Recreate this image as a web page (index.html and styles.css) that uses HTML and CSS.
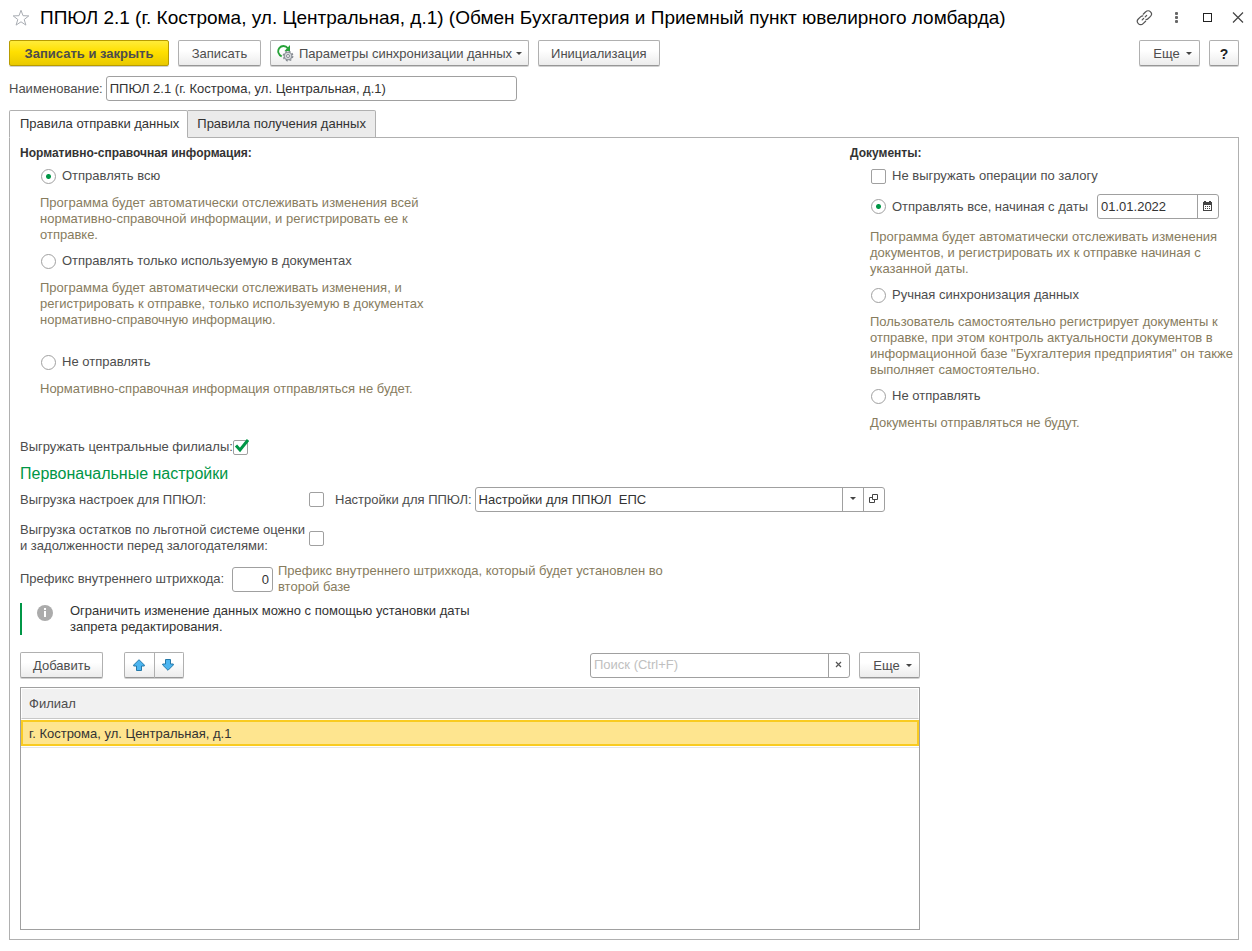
FILE: index.html
```html
<!DOCTYPE html>
<html lang="ru">
<head>
<meta charset="utf-8">
<meta name="viewport" content="width=device-width, initial-scale=1">
<title>ППЮЛ 2.1 (г. Кострома, ул. Центральная, д.1)</title>
<link rel="stylesheet" href="styles.css">
</head>
<body>
<div class="window">
  <header class="titlebar">
    <button class="icon-btn" type="button" aria-label="В избранное">
      <svg width="18" height="18" viewBox="0 0 18 18" fill="none" stroke="#a9adb3" stroke-width="1"><path d="M9 1.3l2 5.4 5.8.2-4.6 3.6 1.7 5.6L9 12.8l-4.900 3.300 1.700-5.600L1.200 6.900 7 6.700z"/></svg>
    </button>
    <h1 class="title">ППЮЛ 2.1 (г. Кострома, ул. Центральная, д.1) (Обмен Бухгалтерия и Приемный пункт ювелирного ломбарда)</h1>
    <div class="window-controls">
      <button class="icon-btn" type="button" aria-label="Получить ссылку">
        <svg width="18" height="18" viewBox="0 0 18 18" fill="none" stroke="#555" stroke-width="1.200" stroke-linecap="round"><path d="M7.200 5.200l2.500-2.400a3.300 3.300 0 0 1 4.800 0 3.300 3.300 0 0 1 0 4.600L12 9.800q-.8.800-2 .8M9.600 12.200l-2.500 2.400a3.300 3.300 0 0 1-4.800 0 3.300 3.300 0 0 1 0-4.600L4.800 7.600q.8-.8 2-.8M6.200 10.900l1.400-1.400M9.200 7.900l1.400-1.400"/></svg>
      </button>
      <button class="icon-btn" type="button" aria-label="Меню">
        <svg width="18" height="18" viewBox="0 0 18 18" fill="#666"><rect x="8" y="3" width="3" height="3" rx="1"/><rect x="8" y="7" width="3" height="3" rx="1"/><rect x="8" y="11" width="3" height="3" rx="1"/></svg>
      </button>
      <button class="icon-btn" type="button" aria-label="Развернуть">
        <svg width="18" height="18" viewBox="0 0 18 18" fill="none" stroke="#222"><rect x="5.500" y="4.500" width="8" height="8"/></svg>
      </button>
      <button class="icon-btn" type="button" aria-label="Закрыть">
        <svg width="18" height="18" viewBox="0 0 18 18" fill="none" stroke="#444" stroke-width="1.200"><path d="M4 3.500l10 10M14 3.500l-10 10"/></svg>
      </button>
    </div>
  </header>

  <div class="toolbar">
    <button class="btn btn-primary" type="button">Записать и закрыть</button>
    <button class="btn" type="button">Записать</button>
    <button class="btn btn-sync" type="button">
      <svg width="18" height="18" viewBox="0 0 18 18" fill="none"><path d="M10.800 3.200A5.300 5.300 0 1 0 4.700 11.300" stroke="#27a338" stroke-width="1.800"/><path d="M13 0v6H7.500z" fill="#27a338"/><g stroke="#868b92"><circle cx="11" cy="11" r="4.800" stroke-width="1.200" stroke-dasharray="2 1.770"/><circle cx="11" cy="11" r="3.900" fill="#d5d8dc"/><circle cx="11" cy="11" r="1.500" fill="#fff"/></g></svg>
      Параметры синхронизации данных
      <span class="caret"></span>
    </button>
    <button class="btn" type="button">Инициализация</button>
    <span class="spacer"></span>
    <button class="btn btn-more" type="button">Еще <span class="caret"></span></button>
    <button class="btn btn-help" type="button" aria-label="Справка">?</button>
  </div>

  <div class="name-row">
    <label for="name">Наименование:</label>
    <input class="field name-field" id="name" type="text" value="ППЮЛ 2.1 (г. Кострома, ул. Центральная, д.1)">
  </div>

  <div class="tabs" role="tablist">
    <button class="tab tab-active" type="button" role="tab" aria-selected="true">Правила отправки данных</button>
    <button class="tab" type="button" role="tab" aria-selected="false">Правила получения данных</button>
  </div>

  <main class="panel">
    <div class="rules">
      <section class="rules-col">
        <h2 class="group-title">Нормативно-справочная информация:</h2>
        <div class="options">
          <label class="option"><input class="radio" type="radio" name="nsi" checked>Отправлять всю</label>
          <p class="hint">Программа будет автоматически отслеживать изменения всей<br>нормативно-справочной информации, и регистрировать ее к<br>отправке.</p>
          <label class="option"><input class="radio" type="radio" name="nsi">Отправлять только используемую в документах</label>
          <p class="hint hint-spaced">Программа будет автоматически отслеживать изменения, и<br>регистрировать к отправке, только используемую в документах<br>нормативно-справочную информацию.</p>
          <label class="option"><input class="radio" type="radio" name="nsi">Не отправлять</label>
          <p class="hint">Нормативно-справочная информация отправляться не будет.</p>
        </div>
      </section>
      <section class="rules-col rules-docs">
        <h2 class="group-title">Документы:</h2>
        <div class="options">
          <label class="option"><input class="check" type="checkbox">Не выгружать операции по залогу</label>
          <div class="date-row">
            <label class="option"><input class="radio" type="radio" name="docs" checked>Отправлять все, начиная с даты</label>
            <div class="combo date-combo">
              <input class="combo-input" type="text" value="01.01.2022" aria-label="Дата начала">
              <button class="combo-btn" type="button" aria-label="Выбрать дату">
                <svg width="9" height="10" viewBox="0 0 9 10" fill="#444"><path d="M0 1h1V0h2v1h3V0h2v1h1v9H0zM1 4v5h7V4z" fill-rule="evenodd"/><path d="M2 5h1v1H2zM4 5h1v1H4zM6 5h1v1H6zM2 7h1v1H2zM4 7h1v1H4zM6 7h1v1H6z"/></svg>
              </button>
            </div>
          </div>
          <p class="hint">Программа будет автоматически отслеживать изменения<br>документов, и регистрировать их к отправке начиная с<br>указанной даты.</p>
          <label class="option"><input class="radio" type="radio" name="docs">Ручная синхронизация данных</label>
          <p class="hint">Пользователь самостоятельно регистрирует документы к<br>отправке, при этом контроль актуальности документов в<br>информационной базе "Бухгалтерия предприятия" он также<br>выполняет самостоятельно.</p>
          <label class="option"><input class="radio" type="radio" name="docs">Не отправлять</label>
          <p class="hint">Документы отправляться не будут.</p>
        </div>
      </section>
    </div>

    <div class="central-row">
      <label for="central">Выгружать центральные филиалы:</label>
      <span class="check-wrap">
        <input class="check" id="central" type="checkbox" checked>
        <svg class="tick" width="15" height="15" viewBox="0 0 15 15" fill="none" stroke="#009646" stroke-width="3"><path d="M2 6.500l4 4.500L14 1"/></svg>
      </span>
    </div>

    <h2 class="section-title">Первоначальные настройки</h2>

    <div class="settings">
      <label class="settings-label" for="export-settings">Выгрузка настроек для ППЮЛ:</label>
      <input class="check" id="export-settings" type="checkbox">
      <label class="combo-label" for="settings">Настройки для ППЮЛ:</label>
      <div class="combo settings-combo">
        <select class="combo-select" id="settings"><option>Настройки для ППЮЛ&nbsp; ЕПС</option></select>
        <span class="combo-arrow"><span class="caret"></span></span>
        <button class="combo-btn" type="button" aria-label="Открыть">
          <svg width="9" height="9" viewBox="0 0 9 9" fill="none" stroke="#444"><path d="M3.500.5h5v5h-5zM3.500 3.500h-3v5h5v-3"/></svg>
        </button>
      </div>
    </div>

    <div class="settings leftovers">
      <label class="settings-label" for="leftovers">Выгрузка остатков по льготной системе оценки<br>и задолженности перед залогодателями:</label>
      <input class="check" id="leftovers" type="checkbox">
    </div>

    <div class="prefix-row">
      <label class="prefix-label" for="prefix">Префикс внутреннего штрихкода:</label>
      <input class="field prefix-field" id="prefix" type="text" value="0">
      <p class="hint">Префикс внутреннего штрихкода, который будет установлен во<br>второй базе</p>
    </div>

    <div class="note">
      <svg width="16" height="16" viewBox="0 0 16 16"><circle cx="8" cy="8" r="8" fill="#ababab"/><path d="M7 3h2v2H7zM7 6h2v6H7z" fill="#fff"/></svg>
      <p class="note-text">Ограничить изменение данных можно с помощью установки даты<br>запрета редактирования.</p>
    </div>

    <section class="branches">
      <div class="branches-bar">
        <button class="btn" type="button">Добавить</button>
        <div class="btn-group">
          <button class="btn btn-arrow" type="button" aria-label="Вверх"><svg width="12" height="12" viewBox="0 0 12 12"><path d="M6 .7l5.300 5.300v1H8.500v4.500h-5V7H.7V6z" fill="#4cb5f0" stroke="#2579a9"/></svg></button>
          <button class="btn btn-arrow" type="button" aria-label="Вниз"><svg width="12" height="12" viewBox="0 0 12 12"><path d="M6 11.300l5.300-5.300V5H8.500V.5h-5V5H.7v1z" fill="#4cb5f0" stroke="#2579a9"/></svg></button>
        </div>
        <span class="spacer"></span>
        <div class="combo search-combo">
          <input class="combo-input" type="text" placeholder="Поиск (Ctrl+F)" aria-label="Поиск">
          <button class="combo-btn" type="button" aria-label="Очистить"><svg width="7" height="7" viewBox="0 0 7 7" stroke="#555" stroke-width="1.200"><path d="M1 1l5 5M6 1l-5 5"/></svg></button>
        </div>
        <button class="btn btn-more" type="button">Еще <span class="caret"></span></button>
      </div>
      <div class="table-box">
        <table class="table">
          <thead><tr><th>Филиал</th></tr></thead>
          <tbody><tr><td>г. Кострома, ул. Центральная, д.1</td></tr></tbody>
        </table>
      </div>
    </section>
  </main>
</div>
</body>
</html>
```
FILE: styles.css
```css
* {
  box-sizing: border-box;
}

body {
  margin: 0;
  background: #fff;
  color: #4d4d4d;
  font: 13px/16px "Liberation Sans", Arial, sans-serif;
}

h1, h2, p {
  margin: 0;
}

button, input, select {
  margin: 0;
  font: inherit;
  color: inherit;
}

svg {
  display: block;
  flex: none;
}

.window {
  display: flex;
  flex-direction: column;
  min-height: 100vh;
  padding: 6px 13px 11px 9px;
}

.titlebar {
  display: flex;
  align-items: center;
  min-height: 24px;
  margin-right: -8px;
  padding-left: 3px;
}

.icon-btn {
  padding: 0;
  border: 0;
  background: none;
}

.title {
  flex: 1;
  margin-left: 10px;
  font-size: 19px;
  font-weight: 400;
  line-height: 24px;
  color: #000;
}

.window-controls {
  display: flex;
  gap: 13px;
}

.toolbar {
  display: flex;
  gap: 9px;
  margin-top: 10px;
}

.spacer {
  flex: 1;
}

.btn {
  display: flex;
  align-items: center;
  justify-content: center;
  min-width: 83px;
  height: 26px;
  padding: 1px 12px 0;
  border: 1px solid #b0b0b0;
  border-bottom-color: #979797;
  border-radius: 2px;
  background: linear-gradient(#fff 40%, #ececec);
  box-shadow: 0 1px 0 #d0d0d0;
  white-space: nowrap;
}

.btn-primary {
  width: 160px;
  border-color: #b89c00;
  background: linear-gradient(#ffec3a, #ffe000 45%, #e9c900);
  font-weight: 700;
}

.btn-sync {
  gap: 4px;
  padding: 1px 6px 0;
}

.btn-more {
  gap: 6px;
  min-width: 61px;
  padding: 1px 6px 0 12px;
}

.btn-help {
  min-width: 30px;
  padding: 1px 0 0;
  font-size: 14px;
  font-weight: 700;
  color: #222;
}

.caret {
  width: 0;
  border: 3px solid transparent;
  border-top-color: #444;
  border-bottom: 0;
}

.name-row {
  display: flex;
  align-items: center;
  gap: 3px;
  margin-top: 10px;
}

.field {
  height: 25px;
  padding: 0 3px;
  border: 1px solid #a0a0a0;
  border-radius: 3px;
  background: #fff;
  color: #333;
}

.name-field {
  width: 411px;
}

.tabs {
  display: flex;
  margin: 9px 0 -1px;
}

.tab {
  height: 28px;
  padding: 0 9px;
  border: 1px solid #b0b0b0;
  border-left-width: 0;
  border-radius: 0 2px 0 0;
  background: #ebebeb;
  color: #333;
}

.tab-active {
  z-index: 1;
  padding-left: 10px;
  padding-right: 8px;
  border-left-width: 1px;
  border-bottom-color: #fff;
  border-radius: 2px 2px 0 0;
  background: #fff;
}

.panel {
  display: flex;
  flex: 1;
  flex-direction: column;
  padding: 7px 9px 9px 10px;
  border: 1px solid #b0b0b0;
}

.rules {
  display: flex;
  justify-content: space-between;
  gap: 20px;
}

.rules-docs {
  width: 379px;
}

.group-title {
  font-size: 12px;
  line-height: 16px;
  font-weight: 700;
  color: #333;
}

.options {
  display: flex;
  flex-direction: column;
  align-items: flex-start;
  gap: 10px;
  margin-top: 7px;
  padding-left: 20px;
}

.option {
  display: flex;
  align-items: center;
  gap: 6px;
  padding-left: 1px;
}

.option + .hint {
  margin-top: 1px;
}

.radio, .check {
  appearance: none;
  flex: none;
  width: 15px;
  height: 15px;
  border: 1px solid #a0a0a0;
  background: #fff;
}

.radio {
  border-radius: 50%;
}

.radio:checked {
  background: radial-gradient(circle, #009646 2px, #fff 3px);
}

.check {
  border-radius: 2px;
}

.hint {
  color: #877c5e;
  white-space: nowrap;
}

.hint-spaced {
  margin-bottom: 16px;
}

.date-row {
  display: flex;
  align-items: center;
  gap: 9px;
}

.combo {
  display: flex;
  height: 25px;
  border: 1px solid #a0a0a0;
  border-radius: 3px;
  background: #fff;
  color: #333;
}

.combo-input {
  flex: 1;
  min-width: 0;
  padding: 0 3px;
  border: 0;
  background: none;
}

.combo-input::placeholder {
  color: #c0c0c0;
}

.combo-btn, .combo-arrow {
  display: flex;
  align-items: center;
  justify-content: center;
  width: 21px;
  padding: 0 1px 2px 0;
  border: 0;
  border-left: 1px solid #a0a0a0;
  background: none;
}

.date-combo {
  width: 122px;
}

.central-row {
  display: flex;
  align-items: center;
  margin-top: 8px;
}

.check-wrap {
  position: relative;
  height: 15px;
}

.check-wrap .check {
  display: block;
}

.tick {
  position: absolute;
  left: 1px;
  top: -1px;
  pointer-events: none;
}

.section-title {
  margin: 9px 0 3px;
  font-size: 16px;
  font-weight: 400;
  line-height: 20px;
  color: #009646;
}

.settings {
  display: flex;
  align-items: center;
  max-width: 865px;
}

.settings-label {
  width: 289px;
}

.combo-label {
  margin: 0 3px 0 11px;
}

.settings-combo {
  display: grid;
  grid-template-columns: 1fr 21px 21px;
  flex: 1;
}

.combo-select {
  grid-area: 1 / 1 / 2 / 3;
  appearance: none;
  padding: 0 24px 0 3px;
  border: 0;
  background: none;
}

.combo-arrow {
  grid-area: 1 / 2;
  pointer-events: none;
}

.leftovers {
  margin-top: 10px;
}

.prefix-row {
  display: flex;
  align-items: center;
  gap: 5px;
  margin-top: 9px;
}

.prefix-label {
  width: 207px;
}

.prefix-field {
  width: 41px;
  text-align: right;
}

.note {
  display: flex;
  gap: 17px;
  margin-top: 8px;
  padding-left: 15px;
  border-left: 2px solid #009646;
  color: #333;
}

.note svg {
  margin-top: 2px;
}

.branches {
  display: flex;
  flex: 1;
  flex-direction: column;
  max-width: 900px;
  margin-top: 17px;
}

.branches-bar {
  display: flex;
  align-items: center;
  gap: 9px;
}

.btn-group {
  display: flex;
  margin-left: 12px;
}

.btn-arrow {
  min-width: 30px;
  padding: 0 2px 0 0;
}

.btn-arrow:first-child {
  min-width: 31px;
  margin-right: -1px;
  border-radius: 2px 0 0 2px;
}

.btn-arrow:last-child {
  border-radius: 0 2px 2px 0;
}

.search-combo {
  width: 260px;
}

.table-box {
  flex: 1;
  min-height: 120px;
  margin-top: 9px;
  border: 1px solid #a0a0a0;
}

.table {
  width: 100%;
  border-bottom: 1px solid #e5e5e5;
  border-spacing: 0 1px;
}

.table th {
  height: 30px;
  padding: 0 7px;
  border: 1px solid #fff;
  border-top: 0;
  border-bottom: 1px solid #c8c8c8;
  background: #f1f1f1;
  font-weight: 400;
  text-align: left;
}

.table td {
  height: 26px;
  padding: 1px 6px 0;
  border: 2px solid #f9cb21;
  background: #fee58f;
  color: #333;
}
```
